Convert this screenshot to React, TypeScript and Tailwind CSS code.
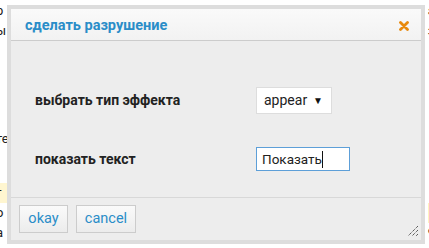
import React from 'react';

const font = { fontFamily: 'Roboto, "Open Sans", sans-serif' };

export default function App() {
  return (
    <div className="relative w-[429px] h-[248px] bg-white overflow-hidden text-[13px] text-[#333]" style={font}>
      {/* page text behind the dialog */}
      <div className="flex justify-between h-full">
        <div className="flex flex-col ml-[-4px] leading-[20px] text-[#222]">
          <span className="mt-[1px]">р</span>
          <span>ы</span>
          <span className="mt-[88px]">те</span>
          <span className="mt-[34px] bg-[#fff6d0]">г</span>
          <span>о</span>
          <span>а</span>
        </div>
        <div className="flex flex-col mr-[-6px] leading-[20px] text-[#222]">
          <span className="mt-[1px]">а</span>
          <span>з</span>
          <span className="mt-[162px] bg-[#fff3c0] text-transparent">.</span>
          <span>9</span>
        </div>
      </div>

      {/* dialog */}
      <div className="absolute left-[7px] top-[5px] w-[418px] h-[239px] border-4 border-[#dddddd] bg-[#ededed] flex flex-col">
        <div className="h-[32px] flex items-center justify-between pl-[14px] pr-[12px] pt-[3px] bg-gradient-to-b from-[#fafafa] to-[#f2f2f2] border-b border-[#cccccc]">
          <span className="font-bold text-[14.5px] text-[#2a8dc8]">сделать разрушение</span>
          <svg width="10" height="10" viewBox="0 0 10 10">
            <path d="M1.5 1.5 L8.5 8.5 M8.5 1.5 L1.5 8.5" stroke="#e8890c" strokeWidth="2.8" strokeLinecap="round" />
          </svg>
        </div>

        <div className="flex-1 flex flex-col pl-[24px] pt-[45px]">
          <div className="flex items-center h-[28px]">
            <span className="w-[221px] font-bold text-[14px] text-[#222]">выбрать тип эффекта</span>
            <div className="w-[76px] h-[27px] bg-white border border-[#dddddd] flex items-center justify-between pl-[7px] pr-[8px]">
              <span className="text-[14px] text-[#222]">appear</span>
              <span className="text-[10px] text-[#111]">▼</span>
            </div>
          </div>
          <div className="flex items-center h-[24px] mt-[33px]">
            <span className="w-[221px] font-bold text-[14px] text-[#222]">показать текст</span>
            <div className="w-[94px] h-[24px] bg-white border border-[#5d9fd8] flex items-center pl-[5px]">
              <span className="text-[13.5px] text-[#222]">Показать</span>
              <span className="w-px h-[17px] bg-[#111]"></span>
            </div>
          </div>
        </div>

        <div className="relative h-[43px] border-t border-[#d8d8d8] flex items-start gap-[8px] pl-[8px] pt-[7px]">
          <button className="w-[49px] h-[28px] border border-[#cccccc] bg-gradient-to-b from-[#fafafa] to-[#ececec] text-[14.5px] text-[#2a8dc8]">okay</button>
          <button className="w-[60px] h-[28px] border border-[#cccccc] bg-gradient-to-b from-[#fafafa] to-[#ececec] text-[14.5px] text-[#2a8dc8]">cancel</button>
          <svg className="absolute right-[2px] bottom-[3px]" width="12" height="12" viewBox="0 0 12 12">
            <path d="M11 1 L1 11 M11 5 L5 11 M11 9 L9 11" stroke="#222" strokeWidth="1" strokeDasharray="1 1" />
          </svg>
        </div>
      </div>
    </div>
  );
}
